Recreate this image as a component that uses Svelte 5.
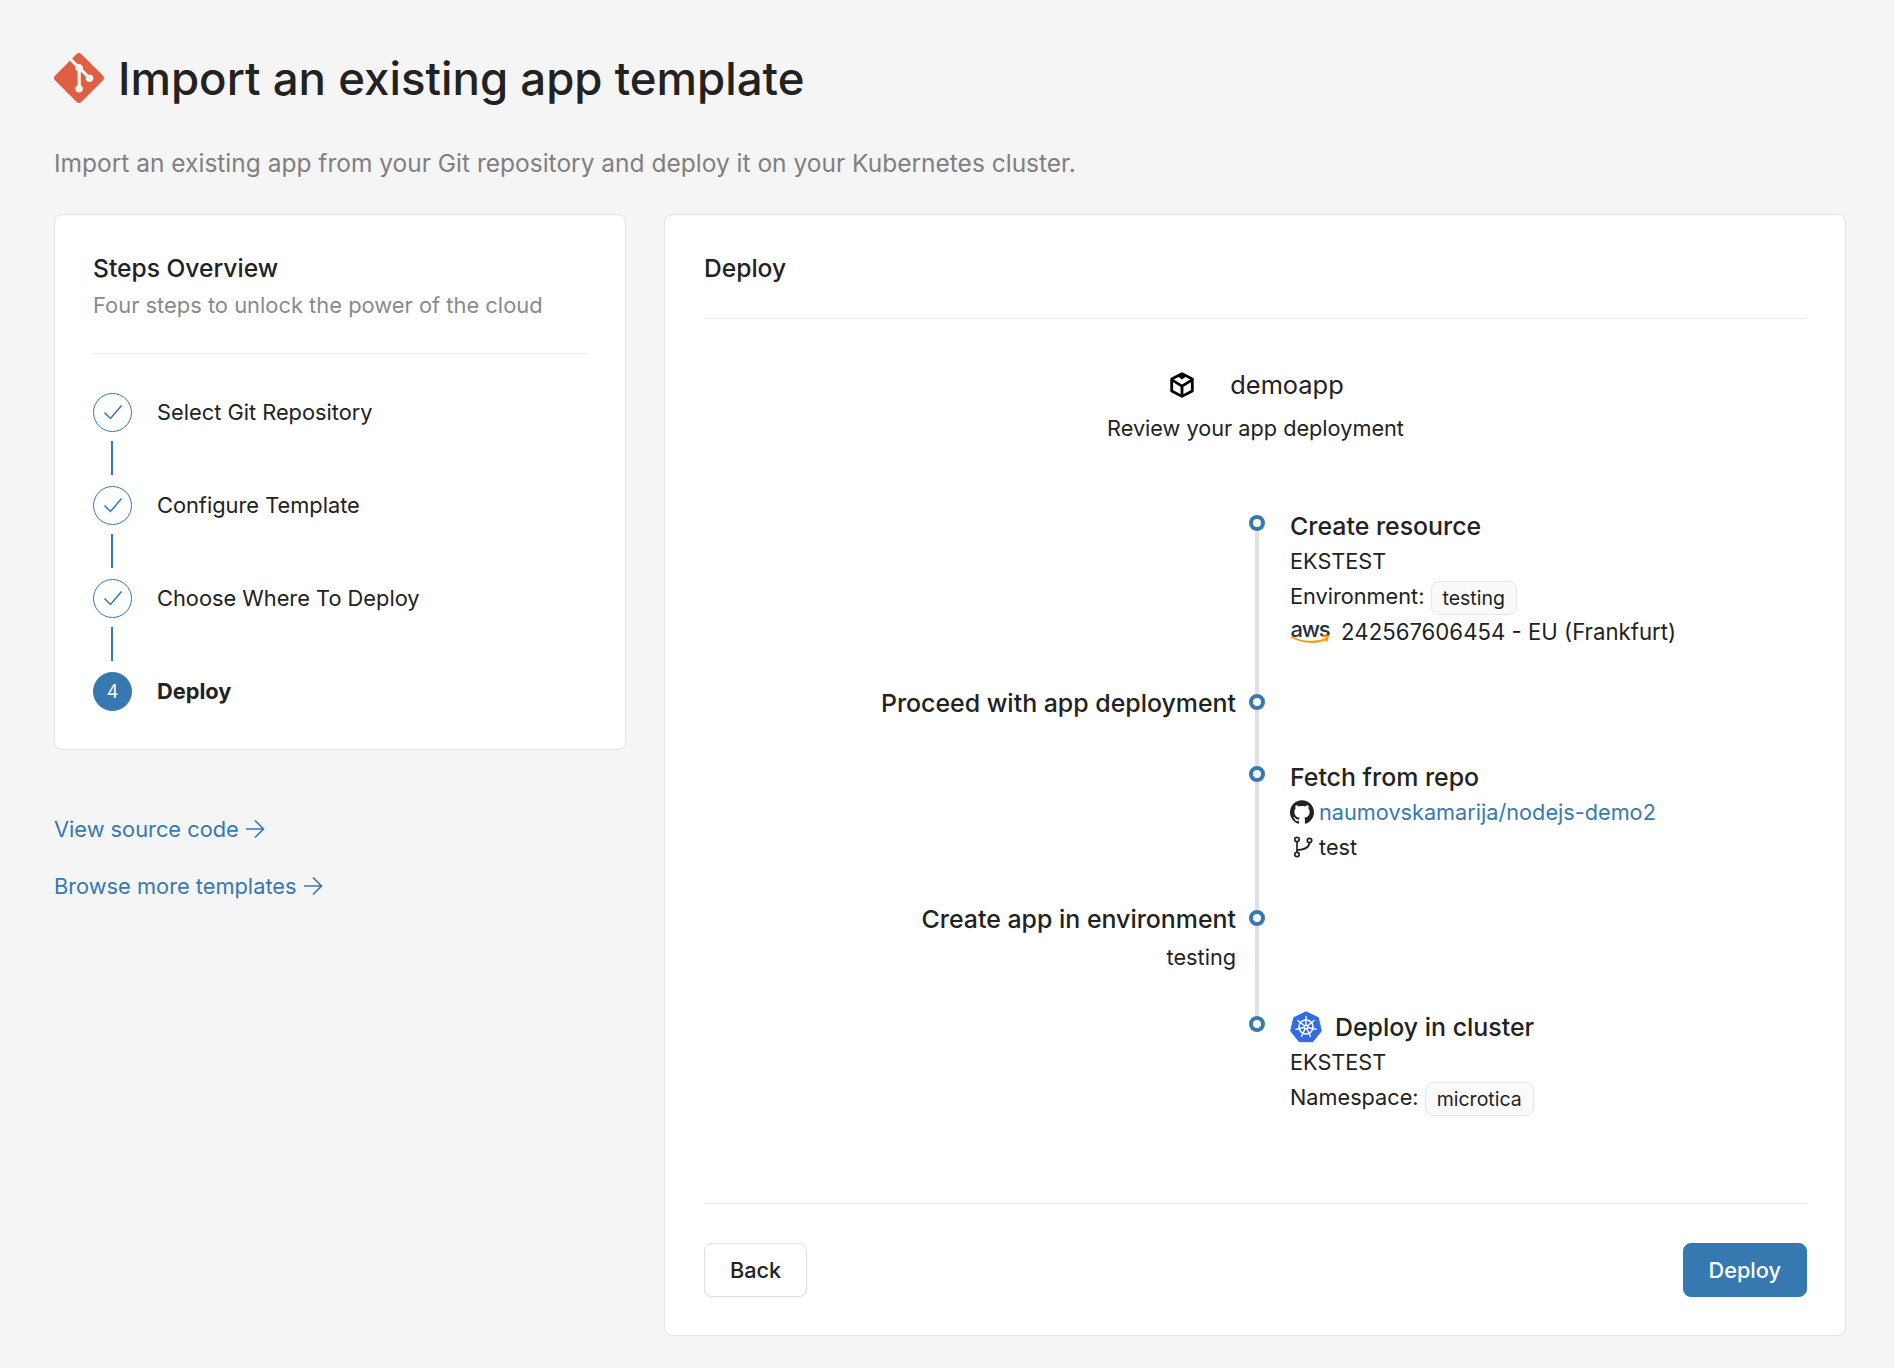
<script lang="ts">
  const steps = ["Select Git Repository", "Configure Template", "Choose Where To Deploy"];

  // seven spokes of the kubernetes wheel
  const spokes = Array.from({ length: 7 }, (_, i) => {
    const a = ((i * 360) / 7 - 90) * (Math.PI / 180);
    const x = (r: number) => (16 + r * Math.cos(a)).toFixed(2);
    const y = (r: number) => (16 + r * Math.sin(a)).toFixed(2);
    return `M${x(2)} ${y(2)}L${x(10.5)} ${y(10.5)}`;
  }).join("");
</script>

<div class="page">
  <header class="head">
    <svg class="git" viewBox="0 0 24 24" aria-hidden="true">
      <path d="M23.546 10.93L13.067.452c-.604-.603-1.582-.603-2.188 0L8.708 2.627l2.76 2.76c.645-.215 1.379-.07 1.889.441.516.515.658 1.258.438 1.9l2.658 2.66c.645-.223 1.387-.078 1.9.435.721.72.721 1.884 0 2.604-.719.719-1.881.719-2.6 0-.539-.541-.674-1.337-.404-1.996L12.86 8.955v6.525c.176.086.342.203.488.348.713.721.713 1.883 0 2.6-.719.721-1.889.721-2.609 0-.719-.719-.719-1.879 0-2.598.182-.18.387-.316.605-.406V8.835c-.217-.091-.424-.222-.6-.401-.545-.545-.676-1.342-.396-2.009L7.636 3.7.45 10.881c-.6.605-.6 1.584 0 2.189l10.48 10.477c.604.604 1.582.604 2.186 0l10.43-10.43c.605-.603.605-1.582 0-2.187" />
    </svg>
    <h1>Import an existing app template</h1>
  </header>
  <p class="sub">Import an existing app from your Git repository and deploy it on your Kubernetes cluster.</p>

  <div class="cols">
    <aside class="side">
      <section class="card overview">
        <h2>Steps Overview</h2>
        <p class="hint">Four steps to unlock the power of the cloud</p>
        <hr />
        <ol class="steps">
          {#each steps as step}
            <li class="step">
              <span class="circle">
                <svg viewBox="0 0 20 20" width="20" height="20" aria-hidden="true">
                  <path d="M1.500 10.500l6 6L18.500 3.500" fill="none" stroke="#3679b0" stroke-width="1.500" />
                </svg>
              </span>
              <span>{step}</span>
            </li>
            <li class="link"></li>
          {/each}
          <li class="step current">
            <span class="circle filled">4</span>
            <span>Deploy</span>
          </li>
        </ol>
      </section>
      <a class="more first" href="#source">View source code
        <svg viewBox="0 0 20 20" width="20" height="20" aria-hidden="true"><path d="M1 10h17.500M10 1.500l8.500 8.500-8.500 8.500" fill="none" stroke="currentColor" stroke-width="1.700" /></svg>
      </a>
      <a class="more" href="#templates">Browse more templates
        <svg viewBox="0 0 20 20" width="20" height="20" aria-hidden="true"><path d="M1 10h17.500M10 1.500l8.500 8.500-8.500 8.500" fill="none" stroke="currentColor" stroke-width="1.700" /></svg>
      </a>
    </aside>

    <main class="card deploy">
      <h2>Deploy</h2>
      <hr class="top" />

      <div class="app">
        <div class="app-name">
          <svg viewBox="0 0 24 24" width="26" height="26" aria-hidden="true">
            <path d="M12 1.500 21.500 6.500v11L12 22.500 2.500 17.500v-11z" fill="none" stroke="#000" stroke-width="2.600" stroke-linejoin="round" />
            <path d="M3 7.500l9 5.500 9-5.500M12 13v9" fill="none" stroke="#000" stroke-width="2.600" />
            <path d="M12 1l4 3-4 3-4-3z" fill="#000" />
          </svg>
          <span>demoapp</span>
        </div>
        <p>Review your app deployment</p>
      </div>

      <div class="timeline">
        <div class="row r1">
          <div class="left"></div>
          <div class="node first"><span class="dot"></span></div>
          <div class="right">
            <div class="title">Create resource</div>
            <div class="line">EKSTEST</div>
            <div class="line">Environment: <span class="tag">testing</span></div>
            <div class="line">
              <span class="aws"><span>aws</span>
                <svg viewBox="0 0 40 10" width="40" height="10" aria-hidden="true">
                  <path d="M1 1.500C11 8 27 8.500 37 3.500" fill="none" stroke="#f90" stroke-width="2" />
                  <path d="M32 1.500l6-.5-1.500 5.500" fill="none" stroke="#f90" stroke-width="1.800" />
                </svg>
              </span>
              <span class="acct">242567606454 - EU (Frankfurt)</span>
            </div>
          </div>
        </div>

        <div class="row r2">
          <div class="left"><div class="title">Proceed with app deployment</div></div>
          <div class="node"><span class="dot"></span></div>
          <div class="right"></div>
        </div>

        <div class="row r3">
          <div class="left"></div>
          <div class="node"><span class="dot"></span></div>
          <div class="right">
            <div class="title">Fetch from repo</div>
            <div class="line with-icon">
              <svg viewBox="0 0 24 24" width="24" height="24" aria-hidden="true">
                <path fill="#222" d="M12 .297c-6.630 0-12 5.373-12 12 0 5.303 3.438 9.800 8.205 11.385.6.113.82-.258.82-.577 0-.285-.01-1.040-.015-2.040-3.338.724-4.042-1.610-4.042-1.610C4.422 18.070 3.633 17.700 3.633 17.700c-1.087-.744.084-.729.084-.729 1.205.084 1.838 1.236 1.838 1.236 1.070 1.835 2.809 1.305 3.495.998.108-.776.417-1.305.760-1.605-2.665-.3-5.466-1.332-5.466-5.930 0-1.310.465-2.380 1.235-3.220-.135-.303-.54-1.523.105-3.176 0 0 1.005-.322 3.300 1.230.96-.267 1.980-.399 3-.405 1.020.006 2.040.138 3 .405 2.280-1.552 3.285-1.230 3.285-1.230.645 1.653.24 2.873.12 3.176.765.84 1.230 1.910 1.230 3.220 0 4.610-2.805 5.625-5.475 5.920.42.36.81 1.096.81 2.220 0 1.606-.015 2.896-.015 3.286 0 .315.21.69.825.57C20.565 22.092 24 17.592 24 12.297c0-6.627-5.373-12-12-12" />
              </svg>
              <a href="#repo">naumovskamarija/nodejs-demo2</a>
            </div>
            <div class="line with-icon">
              <svg viewBox="0 0 24 24" width="24" height="24" aria-hidden="true">
                <g fill="none" stroke="#222" stroke-width="1.700">
                  <circle cx="7" cy="4.500" r="2.200" />
                  <circle cx="7" cy="19.500" r="2.200" />
                  <circle cx="19.500" cy="5.500" r="2.200" />
                  <path d="M7 6.700v10.600M7 15c7 0 12-2 12.500-7.300" />
                </g>
              </svg>
              <span>test</span>
            </div>
          </div>
        </div>

        <div class="row r4">
          <div class="left">
            <div class="title">Create app in environment</div>
            <div class="line">testing</div>
          </div>
          <div class="node"><span class="dot"></span></div>
          <div class="right"></div>
        </div>

        <div class="row r5">
          <div class="left"></div>
          <div class="node last"><span class="dot"></span></div>
          <div class="right">
            <div class="title k8s-title">
              <svg viewBox="0 0 32 32" width="32" height="32" aria-hidden="true">
                <path d="M16 .8 28.300 6.700 31.300 20 22.800 30.700H9.200L.7 20 3.700 6.700z" fill="#326ce5" stroke="#326ce5" stroke-linejoin="round" />
                <g fill="none" stroke="#fff">
                  <circle cx="16" cy="16" r="7" stroke-width="1.600" />
                  <circle cx="16" cy="16" r="1.800" stroke-width="1.400" />
                  <path stroke-width="1.400" stroke-linecap="round" d={spokes} />
                </g>
              </svg>
              <span>Deploy in cluster</span>
            </div>
            <div class="line">EKSTEST</div>
            <div class="line">Namespace: <span class="tag">microtica</span></div>
          </div>
        </div>
      </div>

      <hr class="bottom" />
      <div class="actions">
        <button class="btn">Back</button>
        <button class="btn primary">Deploy</button>
      </div>
    </main>
  </div>
</div>

<style>
  :global(body) {
    background: #f5f5f5;
  }

  .page {
    box-sizing: border-box;
    height: 1368px;
    padding: 49px 48px 0 54px;
    font-family: Inter, "Liberation Sans", sans-serif;
    color: #222;
    font-size: 21.7px;
  }

  .head {
    display: flex;
    align-items: center;
    gap: 14px;
    height: 60px;
  }

  .git {
    width: 50px;
    height: 50px;
    fill: #e05f42;
    flex: none;
    margin-top: -2px;
  }

  h1 {
    margin: 0;
    font-size: 45.6px;
    font-weight: 500;
    line-height: 60px;
  }

  .sub {
    margin: 38px 0 0;
    font-size: 24.5px;
    line-height: 32px;
    color: #808080;
  }

  .cols {
    display: flex;
    gap: 38px;
    align-items: flex-start;
    margin-top: 35px;
  }

  .side {
    width: 572px;
    flex: none;
  }

  .card {
    box-sizing: border-box;
    background: #fff;
    border: 1px solid #e3e3e3;
    border-radius: 8px;
    padding: 37px 38px 0;
  }

  .overview {
    height: 536px;
  }

  .deploy {
    flex: 1;
    height: 1122px;
    padding-left: 39px;
  }

  h2 {
    margin: 0;
    font-size: 24.6px;
    font-weight: 500;
    line-height: 32px;
  }

  .hint {
    margin: 5px 0 0;
    font-size: 21.9px;
    line-height: 32px;
    color: #8a8a8a;
  }

  hr {
    border: 0;
    height: 1px;
    background: #ececec;
    margin: 32px 0 0;
  }

  .steps {
    list-style: none;
    margin: 38px 0 0;
    padding: 0;
  }

  .step {
    display: flex;
    align-items: center;
    gap: 25px;
    height: 40px;
    font-size: 21.8px;
  }

  .step.current {
    font-weight: 700;
  }

  .link {
    width: 2px;
    height: 34px;
    margin: 9px 0 10px 18px;
    background: #3679b0;
  }

  .circle {
    box-sizing: border-box;
    width: 39px;
    height: 39px;
    flex: none;
    display: flex;
    align-items: center;
    justify-content: center;
    border: 1px solid #3679b0;
    border-radius: 50%;
  }

  .filled {
    background: #3679b0;
    color: #fff;
    font-size: 18px;
    font-weight: 400;
  }

  .more {
    display: flex;
    align-items: center;
    gap: 6px;
    margin-top: 33px;
    font-size: 21.8px;
    line-height: 24px;
    color: #3679b0;
    text-decoration: none;
  }

  .more.first {
    margin-top: 67px;
  }

  .top {
    margin-top: 34px;
  }

  .app {
    margin-top: 50px;
    text-align: center;
  }

  .app-name {
    display: flex;
    align-items: center;
    justify-content: center;
    gap: 35px;
    margin-left: 2px;
    font-size: 25.4px;
    line-height: 32px;
  }

  .app p {
    margin: 11px 0 0;
    font-size: 21.7px;
    line-height: 32px;
  }

  .timeline {
    margin-top: 65px;
  }

  .row {
    display: grid;
    grid-template-columns: 532px 16px 1fr;
    column-gap: 13px;
  }

  .r1 { min-height: 179px; }
  .r2 { min-height: 72px; }
  .r3 { min-height: 144px; }
  .r4 { min-height: 106px; }
  .r5 { min-height: 120px; }

  .right {
    padding-left: 12px;
  }

  .left {
    text-align: right;
  }

  .node {
    display: flex;
    flex-direction: column;
    align-items: center;
  }

  .node::before,
  .node::after {
    content: "";
    width: 4px;
    background: #e0e0e4;
  }

  .node::before {
    height: 6px;
  }

  .node::after {
    flex: 1;
  }

  .node.first::before,
  .node.last::after {
    visibility: hidden;
  }

  .dot {
    box-sizing: border-box;
    width: 16px;
    height: 16px;
    flex: none;
    border: 4px solid #3679b0;
    border-radius: 50%;
    background: #fff;
  }

  .title {
    padding-top: 0.6px;
    margin-bottom: 1px;
    font-size: 24.9px;
    font-weight: 500;
    line-height: 32px;
  }

  .left .title {
    padding-top: 0;
    margin-top: -1.5px;
  }

  .line {
    margin-top: 3px;
    font-size: 21.7px;
    line-height: 32px;
  }

  .left .line {
    margin-top: 6px;
  }

  .tag {
    display: inline-block;
    box-sizing: border-box;
    height: 34px;
    margin: -2px 0;
    padding: 0 11px;
    font-size: 19.5px;
    line-height: 32px;
    vertical-align: middle;
    background: #fafafa;
    border: 1px solid #e6e6e6;
    border-radius: 8px;
  }

  .aws {
    display: inline-flex;
    flex-direction: column;
    align-items: center;
    vertical-align: middle;
    margin-right: 5px;
    color: #232f3e;
    font-size: 22px;
    font-weight: 500;
    line-height: 14px;
    letter-spacing: -1.2px;
  }

  .aws svg {
    margin-top: -1px;
  }

  .acct {
    font-size: 22.2px;
  }

  .with-icon {
    display: flex;
    align-items: center;
    gap: 5px;
  }

  .with-icon a {
    color: #3679b0;
    text-decoration: none;
  }

  .k8s-title {
    display: flex;
    align-items: center;
    gap: 13px;
  }

  .bottom {
    margin-top: 73px;
  }

  .actions {
    display: flex;
    justify-content: space-between;
    margin-top: 39px;
  }

  .btn {
    height: 54px;
    padding: 0 25px;
    font: inherit;
    font-size: 21.7px;
    font-weight: 500;
    color: #222;
    background: #fff;
    border: 1px solid #e0e0e0;
    border-radius: 8px;
    box-shadow: 0 2px 2px rgba(0, 0, 0, 0.04);
  }

  .primary {
    color: #fff;
    background: #3679b0;
    border-color: #3679b0;
  }
</style>
